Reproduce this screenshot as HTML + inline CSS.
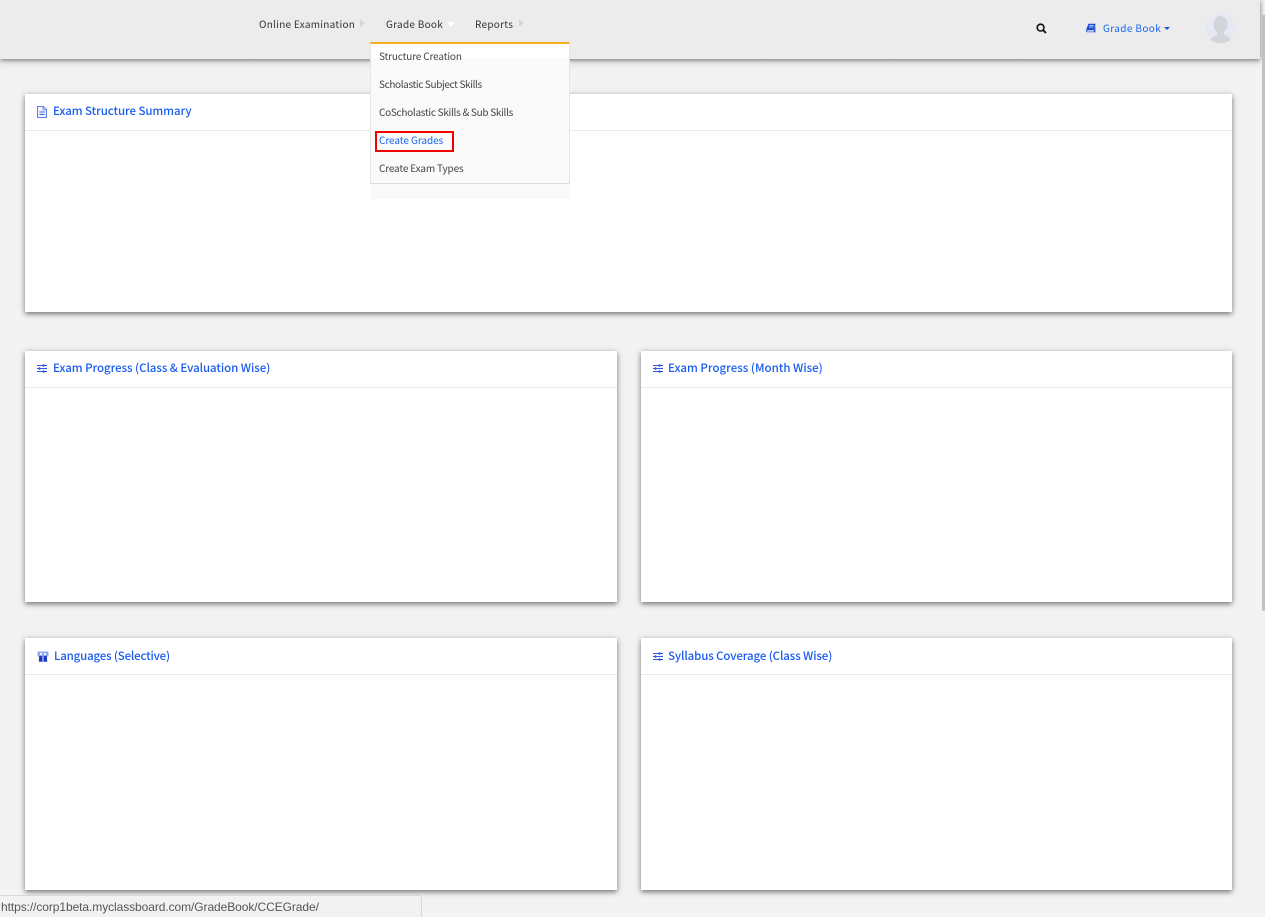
<!DOCTYPE html>
<html lang="en">
<head>
<meta charset="utf-8">
<title>Grade Book</title>
<style>
html,body{margin:0;padding:0;width:1265px;height:917px;overflow:hidden;background:#f3f3f3;}
body{position:relative;font-family:"Noto Sans CJK JP","Liberation Sans",sans-serif;}
.t{position:absolute;white-space:nowrap;line-height:16px;}
.nav{font-size:10px;color:#333;letter-spacing:.27px;}
.menu{font-size:10px;color:#444;}
.card{position:absolute;background:#fff;box-shadow:0 2px 5px rgba(0,0,0,.5),0 0 12px rgba(0,0,0,.06);}
.card .hr{position:absolute;left:0;right:0;top:36px;height:1px;background:#e9e9e9;}
.h{position:absolute;white-space:nowrap;font-size:11.5px;line-height:16px;color:#1a5cf0;font-weight:500;}
svg{position:absolute;display:block;}
.tri{position:absolute;width:0;height:0;}
</style>
</head>
<body>
<!-- header -->
<div style="position:absolute;left:0;top:0;width:1260px;height:59px;background:#ececec;box-shadow:0 1px 5px rgba(0,0,0,.55);z-index:2;"></div>
<div style="position:absolute;left:0;top:59px;width:1260px;height:35px;background:linear-gradient(#e9e9e9,#f3f3f3 12px);"></div>

<div style="position:absolute;z-index:3;left:0;top:0;width:1265px;height:70px;">
<div class="t nav" style="left:259px;top:16px;">Online Examination</div>
<div class="tri" style="left:360px;top:19px;border-left:5px solid #d6d6d6;border-top:4px solid transparent;border-bottom:4px solid transparent;"></div>
<div class="t nav" style="left:386px;top:16px;">Grade Book</div>
<div class="tri" style="left:447px;top:22px;border-top:5px solid #fff;border-left:4px solid transparent;border-right:4px solid transparent;"></div>
<div class="t nav" style="left:475px;top:16px;">Reports</div>
<div class="tri" style="left:519px;top:19px;border-left:5px solid #d6d6d6;border-top:4px solid transparent;border-bottom:4px solid transparent;"></div>

<svg style="left:1036px;top:23px;" width="11" height="11" viewBox="0 0 11 11"><circle cx="4.6" cy="4.6" r="3.4" fill="none" stroke="#111" stroke-width="1.6"/><path d="M7.2 7.2L10 10" stroke="#111" stroke-width="1.9"/></svg>

<svg style="left:1086px;top:23px;" width="10" height="10" viewBox="0 0 10 10"><path d="M2.4.7H9.6L7.8 7.2H1.7C.9 7.2.7 8.6 1.6 8.6H7.6L9.4 2.3V9.2H1.4C-.2 9.2 0 7.4.3 6.2Z" fill="#1f4fd0"/><path d="M3.4 2.4H7.6M3 4H7.2" stroke="#dbe5ff" stroke-width=".8"/></svg>
<div class="t nav" style="left:1103px;top:20px;color:#1a66f0;letter-spacing:.38px;">Grade Book</div>
<div class="tri" style="left:1164px;top:27px;border-top:3px solid #1a55d8;border-left:3.5px solid transparent;border-right:3.5px solid transparent;"></div>

<svg style="left:1205px;top:13px;" width="31" height="31" viewBox="0 0 31 31"><defs><clipPath id="av"><circle cx="15.5" cy="15.5" r="15"/></clipPath></defs><circle cx="15.5" cy="15.5" r="15" fill="#e6e9f3"/><g clip-path="url(#av)" fill="#d3d5da"><ellipse cx="15.5" cy="11.5" rx="7" ry="8.5"/><path d="M12 18H19V21.5C22 23.5 26 24 27 31H4C5 24 9 23.5 12 21.5Z"/></g></svg>
</div>

<!-- cards -->
<div class="card" style="left:25px;top:94px;width:1207px;height:218px;"><div class="hr"></div></div>
<div class="card" style="left:25px;top:351px;width:592px;height:251px;"><div class="hr"></div></div>
<div class="card" style="left:641px;top:351px;width:591px;height:251px;"><div class="hr"></div></div>
<div class="card" style="left:25px;top:638px;width:592px;height:252px;"><div class="hr"></div></div>
<div class="card" style="left:641px;top:638px;width:591px;height:252px;"><div class="hr"></div></div>

<!-- headings -->
<svg style="left:37px;top:106px;" width="10" height="12" viewBox="0 0 10 12"><path d="M.5.5H6.3L9.5 3.7V11.5H.5Z" fill="#f4f6ff" stroke="#5a78e8"/><path d="M6 .5V4H9.5" fill="none" stroke="#5a78e8" stroke-width=".8"/><path d="M2.4 6H7.6M2.4 8.4H7.6" stroke="#3f63e6" stroke-width="1.1"/></svg>
<div class="h" style="left:53px;top:103px;letter-spacing:-.08px;">Exam Structure Summary</div>

<svg style="left:37px;top:364px;" width="10" height="9" viewBox="0 0 10 9"><path d="M0 1.5H10M0 4.5H10M0 7.5H10" stroke="#2e55e0" stroke-width="1"/><path d="M6.5 .2V2.8M2.5 3.2V5.8M6.5 6.2V8.8" stroke="#2e55e0" stroke-width="1.5"/></svg>
<div class="h" style="left:53px;top:360px;letter-spacing:-.06px;">Exam Progress (Class &amp; Evaluation Wise)</div>

<svg style="left:653px;top:364px;" width="10" height="9" viewBox="0 0 10 9"><path d="M0 1.5H10M0 4.5H10M0 7.5H10" stroke="#2e55e0" stroke-width="1"/><path d="M6.5 .2V2.8M2.5 3.2V5.8M6.5 6.2V8.8" stroke="#2e55e0" stroke-width="1.5"/></svg>
<div class="h" style="left:668px;top:360px;">Exam Progress (Month Wise)</div>

<svg style="left:37px;top:651px;" width="12" height="11" viewBox="0 0 12 11"><path d="M1.5 .5H10.5C11.2.5 11.5 1 11.5 1.6V4.5C11.5 5.3 11 5.6 10.4 5.6H1.6C1 5.6.5 5.3.5 4.5V1.6C.5 1 .8.5 1.5.5Z" fill="#8fa6f0"/><circle cx="4" cy="3" r="1.1" fill="#fff"/><circle cx="8" cy="3" r="1.1" fill="#fff"/><path d="M2.2 5H9.8L10.2 10.7H1.8Z" fill="#1a3ac0"/><path d="M6 5V10.7" stroke="#fff" stroke-width=".9"/></svg>
<div class="h" style="left:54px;top:648px;letter-spacing:-.18px;">Languages (Selective)</div>

<svg style="left:653px;top:652px;" width="10" height="9" viewBox="0 0 10 9"><path d="M0 1.5H10M0 4.5H10M0 7.5H10" stroke="#2e55e0" stroke-width="1"/><path d="M6.5 .2V2.8M2.5 3.2V5.8M6.5 6.2V8.8" stroke="#2e55e0" stroke-width="1.5"/></svg>
<div class="h" style="left:668px;top:648px;letter-spacing:-.12px;">Syllabus Coverage (Class Wise)</div>

<!-- dropdown -->
<div style="position:absolute;z-index:4;left:371px;top:183px;width:198px;height:16px;background:#f9f9f9;"></div>
<div style="position:absolute;z-index:5;left:370px;top:42px;width:200px;height:142px;box-sizing:border-box;background:#fafafa;border-top:2px solid #f5ae1e;border-left:1px solid #e5e5e5;border-right:1px solid #e5e5e5;border-bottom:1px solid #dedede;">
<div style="position:absolute;left:0;top:0;right:0;height:15px;background:#fff;"></div>
</div>
<div style="position:absolute;z-index:6;left:0;top:0;">
<div class="t menu" style="left:379px;top:48px;letter-spacing:-.15px;">Structure Creation</div>
<div class="t menu" style="left:379px;top:76px;letter-spacing:-.37px;">Scholastic Subject Skills</div>
<div class="t menu" style="left:379px;top:104px;letter-spacing:-.29px;">CoScholastic Skills &amp; Sub Skills</div>
<div class="t menu" style="left:379px;top:132px;color:#1a66f0;letter-spacing:-.06px;">Create Grades</div>
<div class="t menu" style="left:379px;top:160px;letter-spacing:-.16px;">Create Exam Types</div>
<div style="position:absolute;left:375px;top:131px;width:79px;height:21px;box-sizing:border-box;border:2px solid #f40000;"></div>
</div>

<!-- scrollbar -->
<div style="position:absolute;z-index:7;left:1262px;top:15px;width:3px;height:596px;background:#c1c1c1;"></div>

<!-- status bar -->
<div style="position:absolute;z-index:8;left:-2px;top:895px;width:424px;height:24px;box-sizing:border-box;background:#f2f2f2;border:1px solid #d8d8d8;border-radius:3px;"></div>
<div class="t" style="z-index:9;left:1px;top:899px;font-size:12px;color:#555;font-family:'Liberation Sans',sans-serif;letter-spacing:-.08px;">https://corp1beta.myclassboard.com/GradeBook/CCEGrade/</div>
</body>
</html>
